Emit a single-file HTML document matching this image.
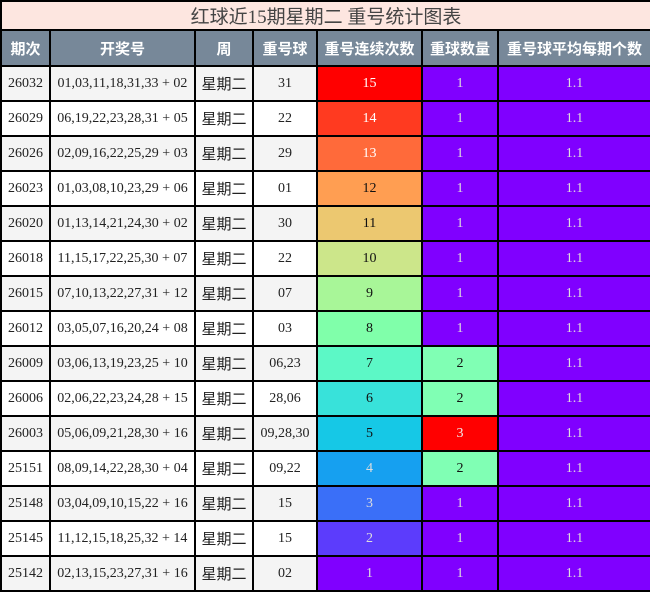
<!DOCTYPE html><html><head><meta charset="utf-8"><style>
*{margin:0;padding:0;box-sizing:border-box}
body{width:650px;height:591px;background:#fff;overflow:hidden}
table{border-collapse:collapse;width:650px;table-layout:fixed;font-family:"Liberation Serif","Noto Serif CJK SC",serif;font-size:14px;color:#222}
td,th{border:2px solid #000;text-align:center;padding:0;white-space:nowrap;overflow:hidden}
.t td{height:27px;background:#fde6e0;font-family:"Liberation Serif","Noto Sans CJK SC",sans-serif;font-size:19px;color:#444}
th{height:36px;background:#778899;color:#fff;font-family:"Liberation Sans","Noto Sans CJK SC",sans-serif;font-size:15px;font-weight:bold}
tbody tr.r td{height:35px}
tr.r:nth-child(odd) td{background:#f4f4f4}
tr.r:nth-child(even) td{background:#fff}
.w{font-family:"Liberation Sans","Noto Sans CJK SC",sans-serif;font-size:15px}
tr.r td.p{background:#8000ff;color:#ddd}
tr.r td.g{background:#80ffb4;color:#111}
tr.r td.rd{background:#ff0000;color:#eee}
</style></head><body>
<table>
<colgroup><col style="width:49px"><col style="width:145px"><col style="width:58px"><col style="width:64px"><col style="width:105px"><col style="width:76px"><col style="width:153px"></colgroup>
<tr class="t"><td colspan="7">红球近15期星期二 重号统计图表</td></tr>
<tr><th>期次</th><th>开奖号</th><th>周</th><th>重号球</th><th>重号连续次数</th><th>重球数量</th><th>重号球平均每期个数</th></tr>
<tr class="r"><td>26032</td><td>01,03,11,18,31,33 + 02</td><td class="w">星期二</td><td>31</td><td style="background:#ff0000;color:#fff">15</td><td class="p">1</td><td class="p">1.1</td></tr>
<tr class="r"><td>26029</td><td>06,19,22,23,28,31 + 05</td><td class="w">星期二</td><td>22</td><td style="background:#ff3a20;color:#fff">14</td><td class="p">1</td><td class="p">1.1</td></tr>
<tr class="r"><td>26026</td><td>02,09,16,22,25,29 + 03</td><td class="w">星期二</td><td>29</td><td style="background:#ff6a3a;color:#fff">13</td><td class="p">1</td><td class="p">1.1</td></tr>
<tr class="r"><td>26023</td><td>01,03,08,10,23,29 + 06</td><td class="w">星期二</td><td>01</td><td style="background:#ff9e52;color:#111">12</td><td class="p">1</td><td class="p">1.1</td></tr>
<tr class="r"><td>26020</td><td>01,13,14,21,24,30 + 02</td><td class="w">星期二</td><td>30</td><td style="background:#ecc870;color:#111">11</td><td class="p">1</td><td class="p">1.1</td></tr>
<tr class="r"><td>26018</td><td>11,15,17,22,25,30 + 07</td><td class="w">星期二</td><td>22</td><td style="background:#cce68a;color:#111">10</td><td class="p">1</td><td class="p">1.1</td></tr>
<tr class="r"><td>26015</td><td>07,10,13,22,27,31 + 12</td><td class="w">星期二</td><td>07</td><td style="background:#a8f698;color:#111">9</td><td class="p">1</td><td class="p">1.1</td></tr>
<tr class="r"><td>26012</td><td>03,05,07,16,20,24 + 08</td><td class="w">星期二</td><td>03</td><td style="background:#80ffaa;color:#111">8</td><td class="p">1</td><td class="p">1.1</td></tr>
<tr class="r"><td>26009</td><td>03,06,13,19,23,25 + 10</td><td class="w">星期二</td><td>06,23</td><td style="background:#5cf8c6;color:#111">7</td><td class="g">2</td><td class="p">1.1</td></tr>
<tr class="r"><td>26006</td><td>02,06,22,23,24,28 + 15</td><td class="w">星期二</td><td>28,06</td><td style="background:#38e2da;color:#111">6</td><td class="g">2</td><td class="p">1.1</td></tr>
<tr class="r"><td>26003</td><td>05,06,09,21,28,30 + 16</td><td class="w">星期二</td><td>09,28,30</td><td style="background:#16c8e6;color:#111">5</td><td class="rd">3</td><td class="p">1.1</td></tr>
<tr class="r"><td>25151</td><td>08,09,14,22,28,30 + 04</td><td class="w">星期二</td><td>09,22</td><td style="background:#16a0f0;color:#ddd">4</td><td class="g">2</td><td class="p">1.1</td></tr>
<tr class="r"><td>25148</td><td>03,04,09,10,15,22 + 16</td><td class="w">星期二</td><td>15</td><td style="background:#3a6ff8;color:#ddd">3</td><td class="p">1</td><td class="p">1.1</td></tr>
<tr class="r"><td>25145</td><td>11,12,15,18,25,32 + 14</td><td class="w">星期二</td><td>15</td><td style="background:#5c3cfc;color:#ddd">2</td><td class="p">1</td><td class="p">1.1</td></tr>
<tr class="r"><td>25142</td><td>02,13,15,23,27,31 + 16</td><td class="w">星期二</td><td>02</td><td style="background:#8000ff;color:#ddd">1</td><td class="p">1</td><td class="p">1.1</td></tr>
</table>
</body></html>
